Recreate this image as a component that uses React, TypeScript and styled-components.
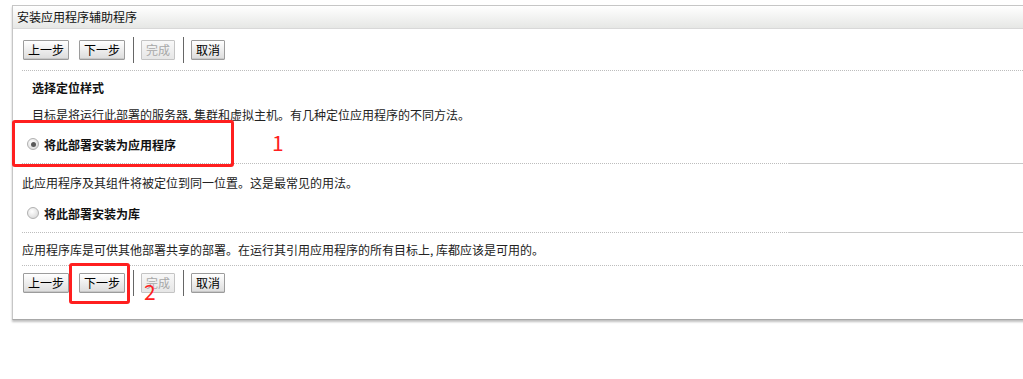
import React from 'react';
import styled, { createGlobalStyle } from 'styled-components';

const GlobalStyle = createGlobalStyle`
  html, body {
    margin: 0;
    padding: 0;
    background: #fff;
    overflow: hidden;
  }
  body {
    font-family: "Noto Sans CJK SC", "Liberation Sans", sans-serif;
    font-size: 12px;
    color: #222;
  }
`;

export default function App() {
  return (
    <>
      <GlobalStyle />
      <Page>
        <Panel>
          <TitleBar>安装应用程序辅助程序</TitleBar>
          <Body>
            <Toolbar top={11} bottom={10}>
              <Button>上一步</Button>
              <Button>下一步</Button>
              <Sep />
              <Button disabled>完成</Button>
              <Sep />
              <Button>取消</Button>
            </Toolbar>
            <Dotted />
            <Heading>选择定位样式</Heading>
            <Desc>目标是将运行此部署的服务器, 集群和虚拟主机。有几种定位应用程序的不同方法。</Desc>
            <RadioRow h={38}>
              <Radio checked />
              <RadioLabel>将此部署安装为应用程序</RadioLabel>
            </RadioRow>
            <MixedLine />
            <Text h={36}>此应用程序及其组件将被定位到同一位置。这是最常见的用法。</Text>
            <RadioRow h={26} pb={6}>
              <Radio />
              <RadioLabel>将此部署安装为库</RadioLabel>
            </RadioRow>
            <MixedLine />
            <Text h={32}>应用程序库是可供其他部署共享的部署。在运行其引用应用程序的所有目标上, 库都应该是可用的。</Text>
            <Dotted />
            <Toolbar top={7} bottom={26}>
              <Button>上一步</Button>
              <Button>下一步</Button>
              <Sep />
              <Button disabled>完成</Button>
              <Sep />
              <Button>取消</Button>
            </Toolbar>
          </Body>
        </Panel>

        <Mark x={12} y={120} w={222} h={47} />
        <Num x={272} y={130}>1</Num>
        <Mark x={69} y={263} w={61} h={41} />
        <Num x={144} y={279}>2</Num>
      </Page>
    </>
  );
}

const Page = styled.div`
  position: relative;
  height: 379px;
  padding: 5px 0 0 12px;
  box-sizing: border-box;
`;

const Panel = styled.div`
  width: 1030px;
  border-top: 1px solid #c6c6c6;
  border-left: 1px solid #c6c6c6;
  border-bottom: 1px solid #a8a8a8;
  box-shadow: 0 2px 2px rgba(0, 0, 0, 0.25);
  background: #fff;
`;

const TitleBar = styled.div`
  height: 22px;
  line-height: 22px;
  padding-left: 4px;
  background: linear-gradient(#ffffff, #e6e7e5);
  border-bottom: 1px solid #d8d8d8;
  color: #111;
`;

const Body = styled.div`
  padding-left: 9px;
`;

const Toolbar = styled.div<{ top: number; bottom: number }>`
  display: flex;
  align-items: center;
  gap: 10px;
  padding: ${p => p.top}px 0 ${p => p.bottom}px 1px;
  height: 20px;
`;

const Button = styled.button`
  height: 20px;
  padding: 0 4px;
  font-family: "Noto Sans CJK SC", "Liberation Sans", sans-serif;
  font-size: 12px;
  line-height: 18px;
  color: #000;
  border: 1px solid #9c9c9c;
  border-radius: 1px;
  background: linear-gradient(#ffffff, #dcdcdc);
  box-shadow: inset 0 -1px 0 #c8c8c8;

  &:disabled {
    color: #a8a8a8;
    border-color: #c4c4c4;
    background: linear-gradient(#f8f8f8, #e6e6e6);
    box-shadow: none;
  }
`;

const Sep = styled.span`
  width: 1px;
  height: 26px;
  background: #666;
  margin: 0 -3px 0 -2px;
`;

const Dotted = styled.div`
  border-top: 1px dotted #bdbdbd;
`;

const MixedLine = styled.div`
  position: relative;
  border-top: 1px dotted #bdbdbd;

  &::after {
    content: '';
    position: absolute;
    left: 766px;
    right: 0;
    top: -1px;
    border-top: 1px solid #c8c8c8;
  }
`;

const Heading = styled.div`
  height: 32px;
  display: flex;
  align-items: center;
  padding-left: 10px;
  font-weight: bold;
  color: #111;
`;

const Desc = styled.div`
  height: 22px;
  display: flex;
  align-items: center;
  padding-left: 10px;
`;

const Text = styled.div<{ h: number }>`
  height: ${p => p.h}px;
  display: flex;
  align-items: center;
`;

const RadioRow = styled.div<{ h: number; pb?: number }>`
  height: ${p => p.h}px;
  padding-bottom: ${p => p.pb ?? 0}px;
  display: flex;
  align-items: center;
  gap: 5px;
  padding-left: 5px;
`;

const Radio = styled.span<{ checked?: boolean }>`
  position: relative;
  width: 12px;
  height: 12px;
  border-radius: 50%;
  box-sizing: border-box;
  border: 1px solid #b0b0b0;
  background: radial-gradient(circle at 40% 35%, #ffffff, #d2d2d2);

  &::after {
    content: '';
    display: ${p => (p.checked ? 'block' : 'none')};
    position: absolute;
    left: 2.5px;
    top: 2.5px;
    width: 5px;
    height: 5px;
    border-radius: 50%;
    background: #5a5a5a;
  }
`;

const RadioLabel = styled.span`
  font-weight: bold;
  color: #111;
`;

const Mark = styled.div<{ x: number; y: number; w: number; h: number }>`
  position: absolute;
  left: ${p => p.x}px;
  top: ${p => p.y}px;
  width: ${p => p.w}px;
  height: ${p => p.h}px;
  box-sizing: border-box;
  border: 3px solid #ff1f1f;
  border-radius: 3px;
`;

const Num = styled.div<{ x: number; y: number }>`
  position: absolute;
  left: ${p => p.x}px;
  top: ${p => p.y}px;
  font-family: "Noto Sans CJK SC", "Liberation Sans", sans-serif;
  font-size: 21px;
  line-height: 24px;
  color: #ff2020;
`;
